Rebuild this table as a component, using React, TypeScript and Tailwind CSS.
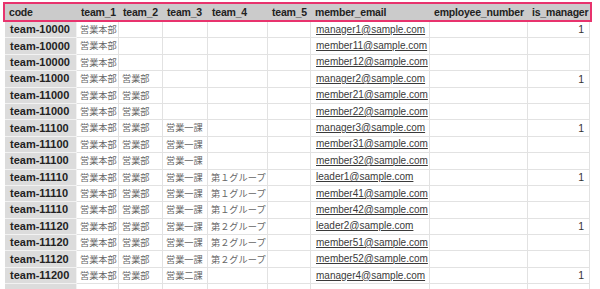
import React from "react";

const widths = [72, 42, 44, 45, 60, 43, 119, 98, 62];
const headers = ["code", "team_1", "team_2", "team_3", "team_4", "team_5", "member_email", "employee_number", "is_manager"];

const H = "営業本部";
const B = "営業部";
const K1 = "営業一課";
const K2 = "営業二課";
const G1 = "第１グループ";
const G2 = "第２グループ";

const rows: string[][] = [
  ["team-10000", H, "", "", "", "", "manager1@sample.com", "", "1"],
  ["team-10000", H, "", "", "", "", "member11@sample.com", "", ""],
  ["team-10000", H, "", "", "", "", "member12@sample.com", "", ""],
  ["team-11000", H, B, "", "", "", "manager2@sample.com", "", "1"],
  ["team-11000", H, B, "", "", "", "member21@sample.com", "", ""],
  ["team-11000", H, B, "", "", "", "member22@sample.com", "", ""],
  ["team-11100", H, B, K1, "", "", "manager3@sample.com", "", "1"],
  ["team-11100", H, B, K1, "", "", "member31@sample.com", "", ""],
  ["team-11100", H, B, K1, "", "", "member32@sample.com", "", ""],
  ["team-11110", H, B, K1, G1, "", "leader1@sample.com", "", "1"],
  ["team-11110", H, B, K1, G1, "", "member41@sample.com", "", ""],
  ["team-11110", H, B, K1, G1, "", "member42@sample.com", "", ""],
  ["team-11120", H, B, K1, G2, "", "leader2@sample.com", "", "1"],
  ["team-11120", H, B, K1, G2, "", "member51@sample.com", "", ""],
  ["team-11120", H, B, K1, G2, "", "member52@sample.com", "", ""],
  ["team-11200", H, B, K2, "", "", "manager4@sample.com", "", "1"],
  ["", "", "", "", "", "", "", "", ""],
];

const latin = { fontFamily: '"Liberation Sans", Arial, sans-serif' };
const jp = { fontFamily: '"Noto Sans CJK JP", sans-serif' };

export default function App() {
  return (
    <div className="w-[600px] h-[289px] overflow-hidden bg-white pt-[2px] pl-[3px]">
      <div className="flex w-[589px] h-[20px] border-2 border-[#e8336d] bg-[#cbcbcb]">
        {headers.map((h, i) => (
          <div
            key={i}
            style={{ width: widths[i], ...latin }}
            className="shrink-0 flex items-center px-[4px] text-[10.5px] font-bold text-[#222] leading-none whitespace-nowrap tracking-[-0.2px]"
          >
            {h}
          </div>
        ))}
      </div>
      <div className="ml-[2px] flex flex-col">
        {rows.map((r, ri) => (
          <div key={ri} className="flex h-[16.4px] shrink-0">
            {r.map((c, ci) => {
              const w = { width: widths[ci] };
              if (ci === 0) {
                return (
                  <div
                    key={ci}
                    style={{ ...w, ...latin }}
                    className="shrink-0 flex items-center px-[5px] bg-[#dcdcdc] border-b border-r border-[#f2f2f2] text-[11px] font-bold text-[#222] leading-none"
                  >
                    {c}
                  </div>
                );
              }
              if (ci === 6) {
                return (
                  <div
                    key={ci}
                    style={{ ...w, ...latin }}
                    className="shrink-0 flex items-center px-[5px] border-b border-r border-[#e2e2e2] text-[10px] text-[#3a3a3a] leading-none whitespace-nowrap"
                  >
                    <span className="underline underline-offset-[1px]">{c}</span>
                  </div>
                );
              }
              if (ci === 8) {
                return (
                  <div
                    key={ci}
                    style={{ ...w, ...latin }}
                    className="shrink-0 flex items-center justify-end px-[5px] border-b border-r border-[#e2e2e2] text-[10.5px] text-[#333] leading-none"
                  >
                    {c}
                  </div>
                );
              }
              return (
                <div
                  key={ci}
                  style={{ ...w, ...jp }}
                  className="shrink-0 flex items-center px-[3px] border-b border-r border-[#e2e2e2] text-[9.2px] text-[#666] leading-none whitespace-nowrap"
                >
                  {c}
                </div>
              );
            })}
          </div>
        ))}
      </div>
    </div>
  );
}
